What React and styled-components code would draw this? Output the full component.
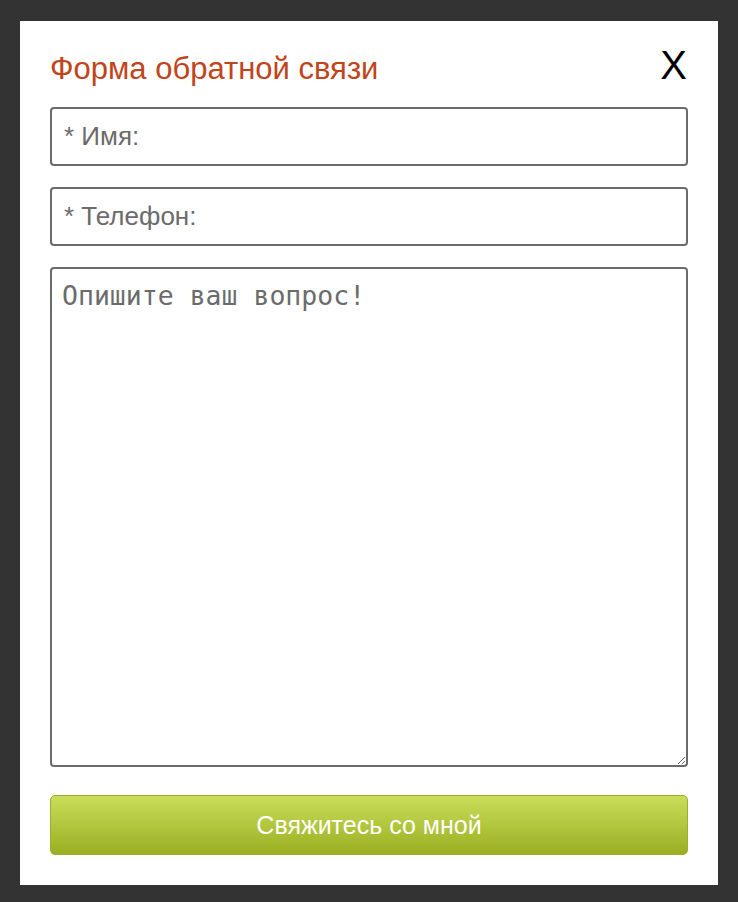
import React from 'react';
import styled, { createGlobalStyle } from 'styled-components';

const GlobalStyle = createGlobalStyle`
    html, body {
        margin: 0;
        padding: 0;
        background: #333333;
    }
    * {
        box-sizing: border-box;
    }
`;

const Page = styled.div`
    padding: 21px 20px 17px 20px;
    min-height: 902px;
`;

const Modal = styled.form`
    background: #ffffff;
    padding: 30px 30px 30px 30px;
    display: flex;
    flex-direction: column;
    gap: 21px;
    font-family: "Liberation Sans", Arial, sans-serif;
`;

const Header = styled.div`
    display: flex;
    justify-content: space-between;
    align-items: flex-start;
    height: 35px;
`;

const Title = styled.h2`
    margin: 0;
    font-size: 31px;
    line-height: normal;
    font-weight: normal;
    color: #c1441a;
`;

const Close = styled.button`
    border: none;
    background: none;
    padding: 0;
    margin: -6px 1px 0 0;
    font-family: "Liberation Sans", Arial, sans-serif;
    font-size: 40px;
    line-height: 1;
    color: #000;
    cursor: pointer;
`;

const Input = styled.input`
    display: block;
    width: 100%;
    height: 59px;
    border: 2px solid #6b6b6b;
    border-radius: 4px;
    padding: 0 12px;
    font-family: "Liberation Sans", Arial, sans-serif;
    font-size: 26px;
    color: #333;
    outline: none;
    &::placeholder {
        color: #6b6b6b;
    }
`;

const Textarea = styled.textarea`
    display: block;
    width: 100%;
    height: 500px;
    border: 2px solid #6b6b6b;
    border-radius: 4px;
    padding: 11px 10px;
    font-family: "DejaVu Sans Mono", monospace;
    font-size: 26.5px;
    color: #333;
    outline: none;
    &::placeholder {
        color: #6b6b6b;
    }
`;

const Submit = styled.button`
    display: block;
    width: 100%;
    height: 60px;
    margin-top: 7px;
    border: 1px solid #9ab02a;
    border-radius: 5px;
    background: linear-gradient(to bottom, #cadd5a, #9aaf22);
    color: #fff;
    font-family: "Liberation Sans", Arial, sans-serif;
    font-size: 25px;
    cursor: pointer;
`;

export default function App() {
    return (
        <>
            <GlobalStyle />
            <Page>
                <Modal onSubmit={e => e.preventDefault()}>
                    <Header>
                        <Title>Форма обратной связи</Title>
                        <Close type="button">X</Close>
                    </Header>
                    <Input type="text" placeholder="* Имя:" />
                    <Input type="tel" placeholder="* Телефон:" />
                    <Textarea placeholder="Опишите ваш вопрос!" />
                    <Submit type="submit">Свяжитесь со мной</Submit>
                </Modal>
            </Page>
        </>
    );
}
